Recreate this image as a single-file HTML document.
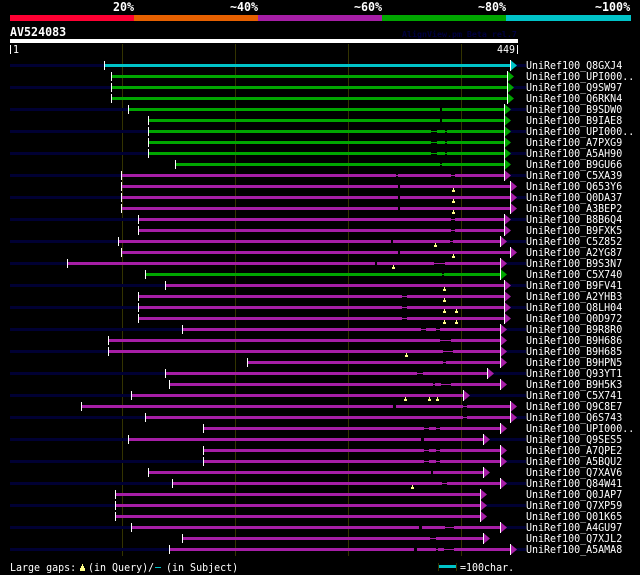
<!DOCTYPE html>
<html><head><meta charset="utf-8"><style>
html,body{margin:0;padding:0;background:#000;width:640px;height:575px;overflow:hidden}
svg{display:block}
text{font-family:"DejaVu Sans Mono","Liberation Mono",monospace;font-size:11px;fill:#fff;white-space:pre;transform-box:fill-box;transform-origin:0 0;transform:scaleX(.909)}
text.b{font-size:12px;font-weight:bold;transform:scaleX(.972)}
text.f{font-size:8.3px;font-weight:bold;fill:#000040;transform:none}
</style></head><body>
<svg width="640" height="575" viewBox="0 0 640 575" xmlns="http://www.w3.org/2000/svg">
<rect width="640" height="575" fill="#000"/>
<rect x="10" y="15" width="124" height="6" fill="#ff0033"/>
<rect x="134" y="15" width="124" height="6" fill="#e66000"/>
<rect x="258" y="15" width="124" height="6" fill="#a61ea6"/>
<rect x="382" y="15" width="124" height="6" fill="#00a600"/>
<rect x="506" y="15" width="125" height="6" fill="#00c3c8"/>
<text class="b" x="113" y="11">20%</text>
<text class="b" x="230" y="11">~40%</text>
<text class="b" x="354" y="11">~60%</text>
<text class="b" x="478" y="11">~80%</text>
<text class="b" x="595" y="11">~100%</text>
<text class="b" x="10" y="36">AV524083</text>
<text class="f" x="402" y="37">AlignView.pm Beta rel.7</text>
<rect x="10" y="39" width="508" height="4" fill="#fff"/>
<path d="M10.5 45V54M517.5 45V54" stroke="#fff" fill="none"/>
<text x="13" y="53">1</text>
<text x="497" y="53">449</text>
<path d="M122.5 44V556M235.5 44V556M348.5 44V556M461.5 44V556" stroke="#333300" fill="none"/>

<path fill="none" stroke="#000033" stroke-width="3" d="M10 65.5H104M515 65.5H526M10 87.5H111M512 87.5H526M10 109.5H128M509 109.5H526M10 131.5H148M509 131.5H526M10 153.5H148M509 153.5H526M10 175.5H121M509 175.5H526M10 197.5H121M515 197.5H526M10 219.5H138M509 219.5H526M10 241.5H118M505 241.5H526M10 263.5H67M505 263.5H526M10 285.5H165M509 285.5H526M10 307.5H138M509 307.5H526M10 329.5H182M505 329.5H526M10 351.5H108M505 351.5H526M10 373.5H165M492 373.5H526M10 395.5H131M468 395.5H526M10 417.5H145M515 417.5H526M10 439.5H128M488 439.5H526M10 461.5H203M505 461.5H526M10 483.5H172M505 483.5H526M10 505.5H115M485 505.5H526M10 527.5H131M505 527.5H526M10 549.5H169M515 549.5H526"/>

<path fill="none" stroke="#00c3c8" stroke-width="3" d="M105 65.5H510"/>

<path fill="none" stroke="#00a600" stroke-width="3" d="M112 76.5H507M112 87.5H507M112 98.5H507M129 109.5H440M442 109.5H504M149 120.5H440M442 120.5H504M149 131.5H431M437 131.5H445M447 131.5H504M149 142.5H431M437 142.5H445M447 142.5H504M149 153.5H431M437 153.5H445M447 153.5H504M176 164.5H440M442 164.5H504M146 274.5H442M444 274.5H500"/>
<path fill="none" stroke="#00a600" d="M431 131.5H437M445 131.5H447M431 142.5H437M445 142.5H447M431 153.5H437M445 153.5H447M440 164.5H442M442 274.5H444"/>

<path fill="none" stroke="#a61ea6" stroke-width="3" d="M122 175.5H396M398 175.5H451M455 175.5H504M122 186.5H398M400 186.5H510M122 197.5H398M400 197.5H510M122 208.5H398M400 208.5H510M139 219.5H451M455 219.5H504M139 230.5H451M455 230.5H504M119 241.5H391M393 241.5H450M453 241.5H500M122 252.5H398M400 252.5H510M68 263.5H375M377 263.5H434M445 263.5H500M166 285.5H504M139 296.5H402M407 296.5H504M139 307.5H402M407 307.5H504M139 318.5H402M407 318.5H504M183 329.5H421M426 329.5H436M440 329.5H500M109 340.5H440M451 340.5H500M109 351.5H443M453 351.5H500M248 362.5H443M446 362.5H500M166 373.5H417M423 373.5H487M170 384.5H433M435 384.5H441M451 384.5H500M132 395.5H463M82 406.5H393M396 406.5H463M467 406.5H510M146 417.5H463M467 417.5H510M204 428.5H424M429 428.5H436M440 428.5H500M129 439.5H421M424 439.5H483M204 450.5H424M429 450.5H436M440 450.5H500M204 461.5H424M429 461.5H436M440 461.5H500M149 472.5H431M433 472.5H483M173 483.5H442M447 483.5H500M116 494.5H480M116 505.5H480M116 516.5H480M132 527.5H419M422 527.5H445M454 527.5H500M183 538.5H430M436 538.5H483M170 549.5H414M417 549.5H436M438 549.5H444M454 549.5H510"/>
<path fill="none" stroke="#a61ea6" d="M396 175.5H398M451 175.5H455M451 219.5H455M451 230.5H455M450 241.5H453M434 263.5H445M402 296.5H407M402 307.5H407M402 318.5H407M421 329.5H426M436 329.5H440M440 340.5H451M443 351.5H453M443 362.5H446M417 373.5H423M433 384.5H435M441 384.5H451M463 406.5H467M463 417.5H467M424 428.5H429M436 428.5H440M424 450.5H429M436 450.5H440M424 461.5H429M436 461.5H440M442 483.5H447M445 527.5H454M430 538.5H436M436 549.5H438M444 549.5H454"/>

<path fill="#00c3c8" d="M511 60.5l6 5-6 5z"/>
<path fill="#00a600" d="M508 71.5l6 5-6 5zM508 82.5l6 5-6 5zM508 93.5l6 5-6 5zM505 104.5l6 5-6 5zM505 115.5l6 5-6 5zM505 126.5l6 5-6 5zM505 137.5l6 5-6 5zM505 148.5l6 5-6 5zM505 159.5l6 5-6 5zM501 269.5l6 5-6 5z"/>
<path fill="#a61ea6" d="M505 170.5l6 5-6 5zM511 181.5l6 5-6 5zM511 192.5l6 5-6 5zM511 203.5l6 5-6 5zM505 214.5l6 5-6 5zM505 225.5l6 5-6 5zM501 236.5l6 5-6 5zM511 247.5l6 5-6 5zM501 258.5l6 5-6 5zM505 280.5l6 5-6 5zM505 291.5l6 5-6 5zM505 302.5l6 5-6 5zM505 313.5l6 5-6 5zM501 324.5l6 5-6 5zM501 335.5l6 5-6 5zM501 346.5l6 5-6 5zM501 357.5l6 5-6 5zM488 368.5l6 5-6 5zM501 379.5l6 5-6 5zM464 390.5l6 5-6 5zM511 401.5l6 5-6 5zM511 412.5l6 5-6 5zM501 423.5l6 5-6 5zM484 434.5l6 5-6 5zM501 445.5l6 5-6 5zM501 456.5l6 5-6 5zM484 467.5l6 5-6 5zM501 478.5l6 5-6 5zM481 489.5l6 5-6 5zM481 500.5l6 5-6 5zM481 511.5l6 5-6 5zM501 522.5l6 5-6 5zM484 533.5l6 5-6 5zM511 544.5l6 5-6 5z"/>

<path fill="none" stroke="#fff" d="M104.5 61V70M111.5 72V81M111.5 83V92M111.5 94V103M128.5 105V114M148.5 116V125M148.5 127V136M148.5 138V147M148.5 149V158M175.5 160V169M121.5 171V180M121.5 182V191M121.5 193V202M121.5 204V213M138.5 215V224M138.5 226V235M118.5 237V246M121.5 248V257M67.5 259V268M145.5 270V279M165.5 281V290M138.5 292V301M138.5 303V312M138.5 314V323M182.5 325V334M108.5 336V345M108.5 347V356M247.5 358V367M165.5 369V378M169.5 380V389M131.5 391V400M81.5 402V411M145.5 413V422M203.5 424V433M128.5 435V444M203.5 446V455M203.5 457V466M148.5 468V477M172.5 479V488M115.5 490V499M115.5 501V510M115.5 512V521M131.5 523V532M182.5 534V543M169.5 545V554"/>
<path fill="none" stroke="#fff" d="M510.5 60V71M507.5 71V82M507.5 82V93M507.5 93V104M504.5 104V115M504.5 115V126M504.5 126V137M504.5 137V148M504.5 148V159M504.5 159V170M504.5 170V181M510.5 181V192M510.5 192V203M510.5 203V214M504.5 214V225M504.5 225V236M500.5 236V247M510.5 247V258M500.5 258V269M500.5 269V280M504.5 280V291M504.5 291V302M504.5 302V313M504.5 313V324M500.5 324V335M500.5 335V346M500.5 346V357M500.5 357V368M487.5 368V379M500.5 379V390M463.5 390V401M510.5 401V412M510.5 412V423M500.5 423V434M483.5 434V445M500.5 445V456M500.5 456V467M483.5 467V478M500.5 478V489M480.5 489V500M480.5 500V511M480.5 511V522M500.5 522V533M483.5 533V544M510.5 544V555"/>

<path fill="#ffff88" d="M452 190h3v2h-3zM453 188h1v2h-1zM452 201h3v2h-3zM453 199h1v2h-1zM452 212h3v2h-3zM453 210h1v2h-1zM434 245h3v2h-3zM435 243h1v2h-1zM452 256h3v2h-3zM453 254h1v2h-1zM392 267h3v2h-3zM393 265h1v2h-1zM443 289h3v2h-3zM444 287h1v2h-1zM443 300h3v2h-3zM444 298h1v2h-1zM443 311h3v2h-3zM444 309h1v2h-1zM455 311h3v2h-3zM456 309h1v2h-1zM443 322h3v2h-3zM444 320h1v2h-1zM455 322h3v2h-3zM456 320h1v2h-1zM405 355h3v2h-3zM406 353h1v2h-1zM404 399h3v2h-3zM405 397h1v2h-1zM428 399h3v2h-3zM429 397h1v2h-1zM436 399h3v2h-3zM437 397h1v2h-1zM411 487h3v2h-3zM412 485h1v2h-1z"/>

<g class="names">
<text x="526" y="69">UniRef100_Q8GXJ4</text>
<text x="526" y="80">UniRef100_UPI000..</text>
<text x="526" y="91">UniRef100_Q9SW97</text>
<text x="526" y="102">UniRef100_Q6RKN4</text>
<text x="526" y="113">UniRef100_B9SDW0</text>
<text x="526" y="124">UniRef100_B9IAE8</text>
<text x="526" y="135">UniRef100_UPI000..</text>
<text x="526" y="146">UniRef100_A7PXG9</text>
<text x="526" y="157">UniRef100_A5AH90</text>
<text x="526" y="168">UniRef100_B9GU66</text>
<text x="526" y="179">UniRef100_C5XA39</text>
<text x="526" y="190">UniRef100_Q653Y6</text>
<text x="526" y="201">UniRef100_Q0DA37</text>
<text x="526" y="212">UniRef100_A3BEP2</text>
<text x="526" y="223">UniRef100_B8B6Q4</text>
<text x="526" y="234">UniRef100_B9FXK5</text>
<text x="526" y="245">UniRef100_C5Z852</text>
<text x="526" y="256">UniRef100_A2YG87</text>
<text x="526" y="267">UniRef100_B9S3N7</text>
<text x="526" y="278">UniRef100_C5X740</text>
<text x="526" y="289">UniRef100_B9FV41</text>
<text x="526" y="300">UniRef100_A2YHB3</text>
<text x="526" y="311">UniRef100_Q8LH04</text>
<text x="526" y="322">UniRef100_Q0D972</text>
<text x="526" y="333">UniRef100_B9R8R0</text>
<text x="526" y="344">UniRef100_B9H686</text>
<text x="526" y="355">UniRef100_B9H685</text>
<text x="526" y="366">UniRef100_B9HPN5</text>
<text x="526" y="377">UniRef100_Q93YT1</text>
<text x="526" y="388">UniRef100_B9H5K3</text>
<text x="526" y="399">UniRef100_C5X741</text>
<text x="526" y="410">UniRef100_Q9C8E7</text>
<text x="526" y="421">UniRef100_Q6S743</text>
<text x="526" y="432">UniRef100_UPI000..</text>
<text x="526" y="443">UniRef100_Q9SES5</text>
<text x="526" y="454">UniRef100_A7QPE2</text>
<text x="526" y="465">UniRef100_A5BQU2</text>
<text x="526" y="476">UniRef100_Q7XAV6</text>
<text x="526" y="487">UniRef100_Q84W41</text>
<text x="526" y="498">UniRef100_Q0JAP7</text>
<text x="526" y="509">UniRef100_Q7XP59</text>
<text x="526" y="520">UniRef100_Q01K65</text>
<text x="526" y="531">UniRef100_A4GU97</text>
<text x="526" y="542">UniRef100_Q7XJL2</text>
<text x="526" y="553">UniRef100_A5AMA8</text>
</g>

<text x="10" y="571">Large gaps:</text>
<path fill="#ffff88" d="M80 568h5v3h-5zM81 566h3v2h-3zM82 564h1v2h-1z"/>
<text x="88" y="571">(in Query)/</text>
<rect x="155" y="567" width="6" height="1" fill="#00c3c8"/>
<text x="166" y="571">(in Subject)</text>
<path fill="none" stroke="#333300" d="M438.5 563V571M456.5 563V571"/>
<rect x="439" y="565" width="17" height="3" fill="#00c3c8"/>
<text x="460" y="571">=100char.</text>
</svg>
</body></html>
